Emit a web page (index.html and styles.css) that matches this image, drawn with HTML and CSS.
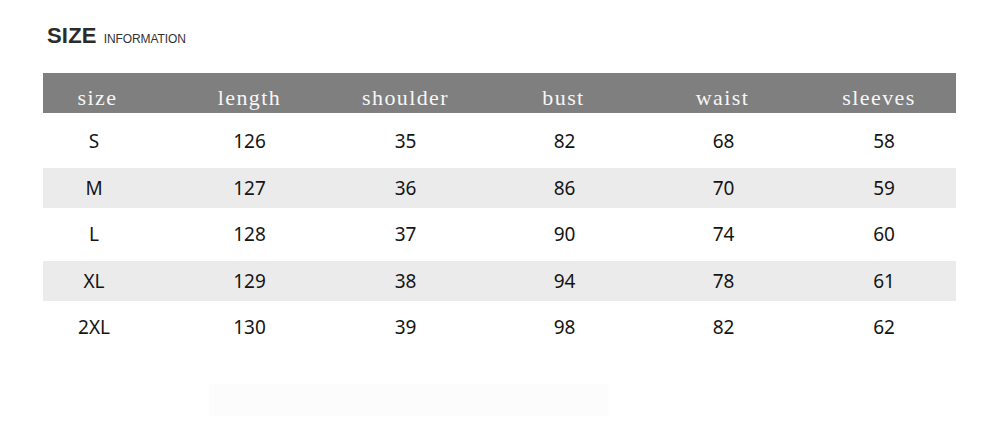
FILE: index.html
```html
<!DOCTYPE html>
<html lang="en">
<head>
<meta charset="utf-8">
<title>Size information</title>
<link rel="stylesheet" href="styles.css">
</head>
<body>
<div class="page">
  <h1 class="title"><span class="title-main">SIZE</span><span class="title-sub">INFORMATION</span></h1>
  <div class="table">
    <div class="row head">
      <div class="cell c1">size</div><div class="cell">length</div><div class="cell">shoulder</div><div class="cell">bust</div><div class="cell">waist</div><div class="cell">sleeves</div>
    </div>
    <div class="row body first">
      <div class="band"><div class="cell c1">S</div><div class="cell">126</div><div class="cell">35</div><div class="cell">82</div><div class="cell">68</div><div class="cell">58</div></div>
    </div>
    <div class="row body alt">
      <div class="band"><div class="cell c1">M</div><div class="cell">127</div><div class="cell">36</div><div class="cell">86</div><div class="cell">70</div><div class="cell">59</div></div>
    </div>
    <div class="row body">
      <div class="band"><div class="cell c1">L</div><div class="cell">128</div><div class="cell">37</div><div class="cell">90</div><div class="cell">74</div><div class="cell">60</div></div>
    </div>
    <div class="row body alt">
      <div class="band"><div class="cell c1">XL</div><div class="cell">129</div><div class="cell">38</div><div class="cell">94</div><div class="cell">78</div><div class="cell">61</div></div>
    </div>
    <div class="row body">
      <div class="band"><div class="cell c1">2XL</div><div class="cell">130</div><div class="cell">39</div><div class="cell">98</div><div class="cell">82</div><div class="cell">62</div></div>
    </div>
  </div>
  <div class="ghost"></div>
</div>
</body>
</html>
```

FILE: styles.css
```css
* { box-sizing: border-box; }
html, body { margin: 0; padding: 0; background: #ffffff; }
.page {
  width: 1000px;
  height: 440px;
  padding: 23px 0 0 43px;
  overflow: hidden;
}
.title {
  margin: 0 0 0 4px;
  height: 26px;
  display: flex;
  align-items: baseline;
  font-family: "Liberation Sans", Arial, sans-serif;
  color: #2b2b2b;
  line-height: 26px;
}
.title-main {
  font-size: 22px;
  font-weight: bold;
  letter-spacing: 0.2px;
}
.title-sub {
  font-size: 12px;
  font-weight: normal;
  margin-left: 7px;
  letter-spacing: -0.1px;
  color: #333;
}
.table {
  width: 913px;
  margin-top: 24px;
}
.row, .band {
  display: grid;
  grid-template-columns: 129px 155px 157px 159px 159px 154px;
  align-items: center;
}
.head {
  height: 40px;
  background: #7f7f7f;
  color: #f6f6f6;
  font-family: "Liberation Serif", "Times New Roman", serif;
  font-size: 22px;
  letter-spacing: 1.4px;
  line-height: 34px;
}
.head .cell { padding-top: 8px; }
.head .c1 { padding-right: 20px; }
.body {
  display: flex;
  align-items: center;
  height: 46.5px;
}
.body.first { margin-top: 4.75px; }
.band {
  width: 100%;
  height: 40px;
  font-family: "Noto Sans", "Open Sans", sans-serif;
  font-size: 19px;
  color: #151515;
}
.alt .band { background: #ebebeb; }
.cell { text-align: center; white-space: nowrap; }
.band .c1 { padding-right: 27px; }
.band .cell:nth-child(4),
.band .cell:nth-child(5) { padding-left: 2px; }
.band .cell:nth-child(6) { padding-left: 10px; }
.ghost {
  width: 400px;
  height: 32px;
  margin: 34px 0 0 166px;
  background: #fcfcfc;
  border-radius: 4px;
}
```
